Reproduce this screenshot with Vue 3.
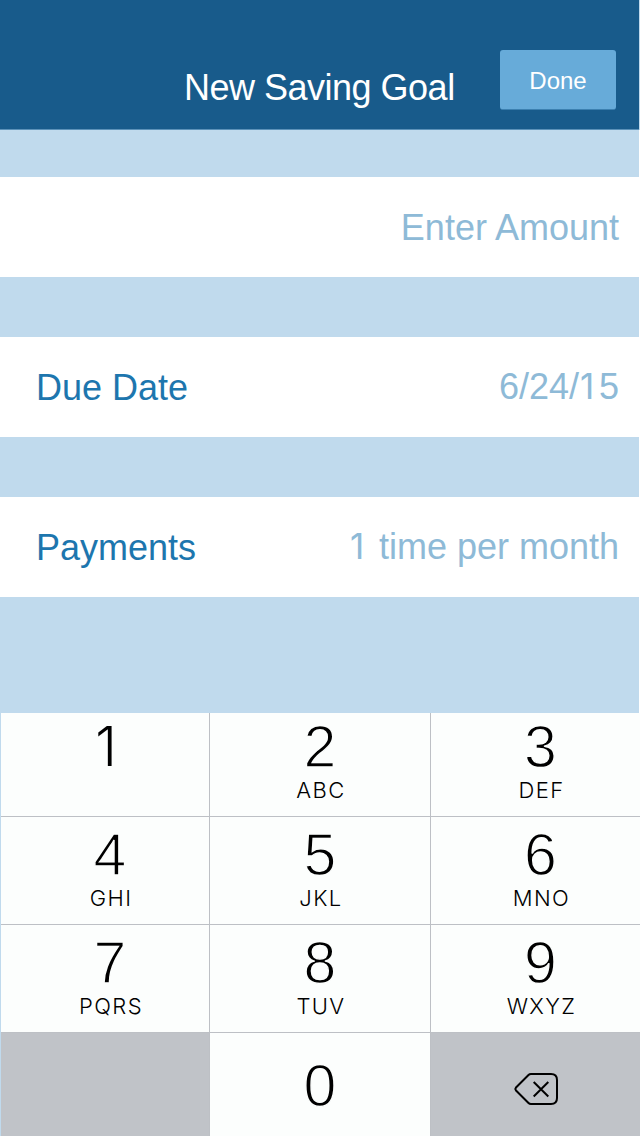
<script setup>
const keys = [
  { digit: '1', letters: '' },
  { digit: '2', letters: 'ABC' },
  { digit: '3', letters: 'DEF' },
  { digit: '4', letters: 'GHI' },
  { digit: '5', letters: 'JKL' },
  { digit: '6', letters: 'MNO' },
  { digit: '7', letters: 'PQRS' },
  { digit: '8', letters: 'TUV' },
  { digit: '9', letters: 'WXYZ' },
]
</script>

<template>
  <div class="screen">
    <header class="bar">
      <h1 class="title">New Saving Goal</h1>
      <button class="done">Done</button>
    </header>
    <main class="form">
      <div class="row amount">
        <span class="value">Enter Amount</span>
      </div>
      <div class="row">
        <span class="label">Due Date</span>
        <span class="value date">6/24/<span class="one">1</span>5</span>
      </div>
      <div class="row">
        <span class="label">Payments</span>
        <span class="value times"><span class="one">1</span> time per month</span>
      </div>
    </main>
    <div class="keypad">
      <button v-for="k in keys" :key="k.digit" class="key">
        <span class="digit" :class="{ single: k.digit === '1' }">{{ k.digit }}</span>
        <span class="letters">{{ k.letters }}</span>
      </button>
      <div class="key blank"></div>
      <button class="key zero"><span class="digit">0</span></button>
      <button class="key erase" aria-label="Delete">
        <svg width="46" height="34" viewBox="0 0 46 34" fill="none" stroke="#000" stroke-width="2">
          <path d="M18 2H38Q44 2 44 8V26Q44 32 38 32H18Q16.500 32 15.500 31L3 18.500Q1.700 17 3 15.500L15.500 3Q16.500 2 18 2Z" />
          <path d="M20.700 10L35.300 24.500M35.300 10L20.700 24.500" />
        </svg>
      </button>
    </div>
  </div>
</template>

<style>
body {
  margin: 0;
  background: #c0daed;
}
</style>

<style scoped>
.screen {
  width: 640px;
  height: 1136px;
  display: flex;
  flex-direction: column;
  overflow: hidden;
  background: #c0daed;
  font-family: "Liberation Sans", Arial, sans-serif;
}
button {
  border: 0;
  margin: 0;
  padding: 0;
  font-family: inherit;
}
.bar {
  box-sizing: border-box;
  width: 639px;
  height: 130px;
  flex: none;
  display: grid;
  grid-template-columns: 184px 1fr 116px;
  padding: 50px 23px 0 0;
  align-items: start;
  background: #185b8b;
  border-bottom: 1px solid #5c92b9;
}
.title {
  grid-column: 2;
  margin: 17px 0 0 0;
  font-size: 36px;
  line-height: 42px;
  font-weight: 400;
  letter-spacing: -0.5px;
  color: #fff;
  white-space: nowrap;
}
.done {
  width: 116px;
  height: 60px;
  border-radius: 3px;
  border-bottom: 1px solid #3c80b0;
  background: #67abd9;
  color: #fff;
  font-size: 24px;
  line-height: 59px;
  padding-top: 1px;
}
.form {
  display: flex;
  flex-direction: column;
  gap: 60px;
  padding: 47px 0 116px;
  border-right: 1px solid #fff;
}
.row {
  height: 100px;
  display: flex;
  justify-content: space-between;
  align-items: center;
  box-sizing: border-box;
  padding: 0 20px 0 36px;
  background: #fff;
  font-size: 36px;
  line-height: 42px;
}
.label {
  color: #1d76ae;
  padding-top: 2px;
}
.value {
  color: #8ebad7;
}
.amount {
  justify-content: flex-end;
}
.amount .value {
  padding-top: 2px;
}
.one {
  font-family: Inter, sans-serif;
  font-size: 35px;
  line-height: 1;
  display: inline-block;
  width: 20px;
  text-indent: 1px;
}
.keypad {
  margin-left: 1px;
  display: grid;
  grid-template-columns: 208px 220px 209px;
  grid-template-rows: 103px 107px 107px 103px;
  gap: 1px;
  background: #bdc0c5;
}
.key {
  display: flex;
  flex-direction: column;
  align-items: center;
  justify-content: flex-end;
  box-sizing: border-box;
  padding-bottom: 12px;
  background: #fcfefd;
  color: #000;
  font-weight: 300;
}
.key:nth-child(3n + 1),
.key:nth-child(3n) {
  padding-left: 10px;
}
/* A key-coloured outline trims the digits down to a light weight. */
.digit {
  font-size: 59px;
  line-height: 50px;
  height: 50px;
  -webkit-text-stroke: 1.4px #fcfefd;
}
.digit.single {
  font-family: Inter, sans-serif;
  font-size: 55px;
  margin-right: 8px;
  -webkit-text-stroke: 0;
}
.letters {
  height: 28px;
  margin-top: 4px;
  font-family: Inter, sans-serif;
  font-size: 22px;
  line-height: 28px;
  letter-spacing: 1.4px;
  padding-left: 2px;
}
.digit.single + .letters {
  margin-top: 5px;
}
.key.blank,
.key.erase {
  background: #c0c3c8;
}
.key.zero {
  justify-content: center;
  padding: 3px 0 0;
}
.key.erase {
  justify-content: center;
  padding: 9px 0 0;
}
</style>
